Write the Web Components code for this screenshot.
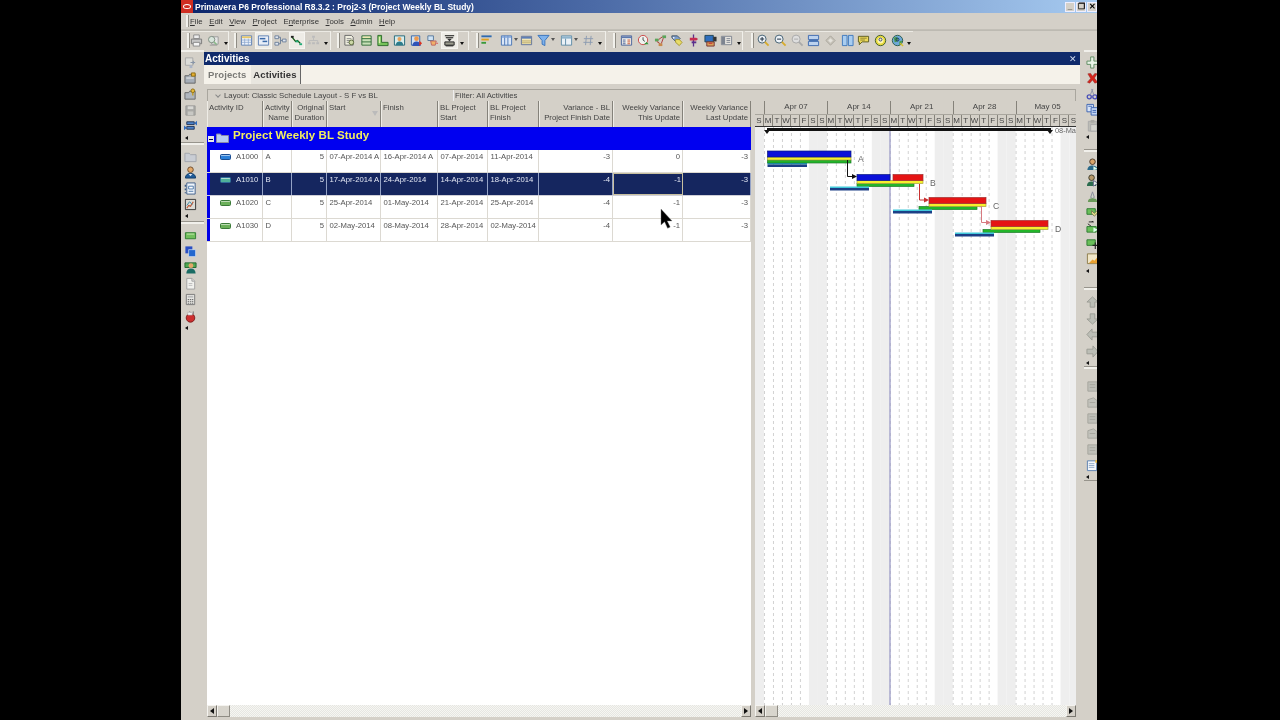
<!DOCTYPE html>
<html lang="en"><head><meta charset="utf-8"><title>Primavera P6</title>
<style>html,body{margin:0;background:#000;height:100%;overflow:hidden}</style></head>
<body>
<p6-app>
  <p6-titlebar slot="top">Primavera P6 Professional R8.3.2 : Proj2-3 (Project Weekly BL Study)</p6-titlebar>
  <p6-menubar slot="top"><span><u>F</u>ile</span><span><u>E</u>dit</span><span><u>V</u>iew</span><span><u>P</u>roject</span><span>E<u>n</u>terprise</span><span><u>T</u>ools</span><span><u>A</u>dmin</span><span><u>H</u>elp</span></p6-menubar>
  <p6-toolbar slot="top">
    <p6-tgroup style="width:47px;padding-left:5px;margin-left:1px"><p6-grip style="margin-right:-2px"></p6-grip><p6-icon name="print" w="17"></p6-icon><p6-icon name="preview" w="17"></p6-icon><p6-more w="7"></p6-more></p6-tgroup>
    <p6-tgroup style="width:100px;padding-left:3px;margin-left:2px"><p6-grip style="margin-right:1.5px"></p6-grip><p6-icon name="table"></p6-icon><p6-icon name="ganttbtn" on></p6-icon><p6-icon name="netw"></p6-icon><p6-icon name="rel" on></p6-icon><p6-icon name="dim"></p6-icon><p6-more w="8"></p6-more></p6-tgroup>
    <p6-tgroup style="width:136px;padding-left:4px;margin-left:2px"><p6-grip style="margin-right:1px"></p6-grip><p6-icon name="docs"></p6-icon><p6-icon name="rows"></p6-icon><p6-icon name="lshape"></p6-icon><p6-icon name="person1"></p6-icon><p6-icon name="person2"></p6-icon><p6-icon name="cup"></p6-icon><p6-icon name="stack" on></p6-icon><p6-more w="8"></p6-more></p6-tgroup>
    <p6-tgroup style="width:135px;padding-left:5px;margin-left:2px"><p6-grip style="margin-right:-1px"></p6-grip><p6-icon name="bars" w="16"></p6-icon><p6-icon name="cols" w="16" style="margin-left:4px"></p6-icon><p6-more w="4" tiny></p6-more><p6-icon name="calendar" w="16"></p6-icon><p6-icon name="filter" w="16" style="margin-left:1px"></p6-icon><p6-more w="4" tiny></p6-more><p6-icon name="layout" w="16" style="margin-left:3px"></p6-icon><p6-more w="4" tiny></p6-more><p6-icon name="hash" w="16" style="margin-left:2px"></p6-icon><p6-more w="8"></p6-more></p6-tgroup>
    <p6-tgroup style="width:135px;padding-left:5px;margin-left:2px"><p6-grip style="margin-right:2.5px"></p6-grip><p6-icon name="sheet"></p6-icon><p6-icon name="clock"></p6-icon><p6-icon name="tree"></p6-icon><p6-icon name="tags"></p6-icon><p6-icon name="pin"></p6-icon><p6-icon name="screen"></p6-icon><p6-icon name="panel"></p6-icon><p6-more w="7"></p6-more></p6-tgroup>
    <p6-tgroup style="width:168px;padding-left:6px;margin-left:2px;border-right:0"><p6-grip style="margin-right:1.5px"></p6-grip><p6-icon name="zin"></p6-icon><p6-icon name="zout"></p6-icon><p6-icon name="zdim"></p6-icon><p6-icon name="split"></p6-icon><p6-icon name="diamond"></p6-icon><p6-icon name="twocol"></p6-icon><p6-icon name="note"></p6-icon><p6-icon name="help"></p6-icon><p6-icon name="globe"></p6-icon><p6-more w="7"></p6-more></p6-tgroup>
  </p6-toolbar>

  <p6-vbar slot="left" style="width:23px;--vw:18px">
    <p6-vgroup style="height:93px;padding-top:5px"><p6-icon name="vlink" h="15.75"></p6-icon><p6-icon name="vfolder1" h="15.75"></p6-icon><p6-icon name="vfolder2" h="15.75"></p6-icon><p6-icon name="vsave" h="15.75"></p6-icon><p6-icon name="vswap" h="15.75"></p6-icon><p6-more vertical h="8"></p6-more></p6-vgroup>
    <p6-vgroup style="height:79px;padding-top:6px"><p6-icon name="vfolder3" h="15.9"></p6-icon><p6-icon name="vperson" h="15.9"></p6-icon><p6-icon name="vform" h="15.9"></p6-icon><p6-icon name="vchart" h="15.9"></p6-icon><p6-more vertical h="7"></p6-more></p6-vgroup>
    <p6-vgroup style="height:109px;padding-top:5px;border-bottom:0"><p6-icon name="vbar" h="16.2"></p6-icon><p6-icon name="vstack" h="16.2"></p6-icon><p6-icon name="vperson2" h="16.2"></p6-icon><p6-icon name="vdoc" h="16.2"></p6-icon><p6-icon name="vcalc" h="16.2"></p6-icon><p6-icon name="vapple" h="16.2"></p6-icon><p6-more vertical h="7"></p6-more></p6-vgroup>
  </p6-vbar>

  <p6-panel heading="Activities">
    <p6-tab slot="tabs">Projects</p6-tab>
    <p6-tab slot="tabs" active>Activities</p6-tab>
    <p6-filterbar slot="filters"><span>Layout: Classic Schedule Layout - S F vs BL</span><span>Filter: All Activities</span></p6-filterbar>
    <p6-table slot="table">
      <p6-row head>
        <p6-hcell>Activity ID</p6-hcell>
        <p6-hcell r>Activity<br>Name</p6-hcell>
        <p6-hcell r>Original<br>Duration</p6-hcell>
        <p6-hcell sorted>Start</p6-hcell>
        <p6-hcell>Finish</p6-hcell>
        <p6-hcell>BL Project<br>Start</p6-hcell>
        <p6-hcell>BL Project<br>Finish</p6-hcell>
        <p6-hcell r>Variance - BL<br>Project Finish Date</p6-hcell>
        <p6-hcell r>Weekly Variance<br>This Update</p6-hcell>
        <p6-hcell r>Weekly Variance<br>Last Update</p6-hcell>
      </p6-row>
      <p6-wbs>Project Weekly BL Study</p6-wbs>
      <p6-row>
        <p6-cell first><p6-taskicon kind="blue"></p6-taskicon>A1000</p6-cell><p6-cell>A</p6-cell><p6-cell r>5</p6-cell><p6-cell>07-Apr-2014 A</p6-cell><p6-cell>16-Apr-2014 A</p6-cell><p6-cell>07-Apr-2014</p6-cell><p6-cell>11-Apr-2014</p6-cell><p6-cell r>-3</p6-cell><p6-cell r>0</p6-cell><p6-cell r>-3</p6-cell>
      </p6-row>
      <p6-row selected>
        <p6-cell first><p6-taskicon kind="mix"></p6-taskicon>A1010</p6-cell><p6-cell>B</p6-cell><p6-cell r>5</p6-cell><p6-cell>17-Apr-2014 A</p6-cell><p6-cell>24-Apr-2014</p6-cell><p6-cell>14-Apr-2014</p6-cell><p6-cell>18-Apr-2014</p6-cell><p6-cell r>-4</p6-cell><p6-cell r focus>-1</p6-cell><p6-cell r>-3</p6-cell>
      </p6-row>
      <p6-row>
        <p6-cell first><p6-taskicon kind="green"></p6-taskicon>A1020</p6-cell><p6-cell>C</p6-cell><p6-cell r>5</p6-cell><p6-cell>25-Apr-2014</p6-cell><p6-cell>01-May-2014</p6-cell><p6-cell>21-Apr-2014</p6-cell><p6-cell>25-Apr-2014</p6-cell><p6-cell r>-4</p6-cell><p6-cell r>-1</p6-cell><p6-cell r>-3</p6-cell>
      </p6-row>
      <p6-row>
        <p6-cell first><p6-taskicon kind="green"></p6-taskicon>A1030</p6-cell><p6-cell>D</p6-cell><p6-cell r>5</p6-cell><p6-cell>02-May-2014</p6-cell><p6-cell>08-May-2014</p6-cell><p6-cell>28-Apr-2014</p6-cell><p6-cell>02-May-2014</p6-cell><p6-cell r>-4</p6-cell><p6-cell r>-1</p6-cell><p6-cell r>-3</p6-cell>
      </p6-row>
    </p6-table>
    <p6-scroll slot="tablescroll"></p6-scroll>
    <p6-gantt slot="gantt"></p6-gantt>
    <p6-scroll slot="ganttscroll"></p6-scroll>
  </p6-panel>

  <p6-vbar slot="right" style="padding-left:4px;width:26px;--vw:16px">
    <p6-vgroup style="height:100px;padding-top:5px"><p6-icon name="rplus" h="15.7"></p6-icon><p6-icon name="rx" h="15.7"></p6-icon><p6-icon name="rscis" h="15.7"></p6-icon><p6-icon name="rcopy" h="15.7"></p6-icon><p6-icon name="rpaste" h="15.7"></p6-icon><p6-more vertical h="7" left></p6-more></p6-vgroup>
    <p6-vgroup style="height:138px;padding-top:7px"><p6-icon name="rp1" h="15.7"></p6-icon><p6-icon name="rp2" h="15.7"></p6-icon><p6-icon name="rp3" h="15.7"></p6-icon><p6-icon name="rg1" h="15.7"></p6-icon><p6-icon name="rg2" h="15.7"></p6-icon><p6-icon name="rg3" h="15.7"></p6-icon><p6-icon name="rfold" h="15.7"></p6-icon><p6-more vertical h="9" left></p6-more></p6-vgroup>
    <p6-vgroup style="height:79px;padding-top:6px"><p6-icon name="aup" h="16.3"></p6-icon><p6-icon name="adown" h="16.3"></p6-icon><p6-icon name="aleft" h="16.3"></p6-icon><p6-icon name="aright" h="16.3"></p6-icon><p6-more vertical h="7" left></p6-more></p6-vgroup>
    <p6-vgroup style="height:114px;padding-top:12px"><p6-icon name="rd1" h="15.7"></p6-icon><p6-icon name="rd2" h="15.7"></p6-icon><p6-icon name="rd1" h="15.7"></p6-icon><p6-icon name="rd2" h="15.7"></p6-icon><p6-icon name="rd1" h="15.7"></p6-icon><p6-icon name="rnote" h="15.7"></p6-icon><p6-more vertical h="8" left></p6-more></p6-vgroup>
  </p6-vbar>

  <svg slot="cursor" width="16" height="24" viewBox="0 0 16 24"><path d="M1 1v16l3.6-3.2 3 6.5 2.6-1.2-3-6.2H12z" fill="#000" stroke="#777" stroke-width=".4"/></svg>
</p6-app>

<script>
const FONT = '"Liberation Sans",Arial,sans-serif';
function def(name, css, html, init) {
  customElements.define(name, class extends HTMLElement {
    constructor(){ super(); const r=this.attachShadow({mode:'open'}); r.innerHTML='<style>'+css+'</style>'+html; }
    connectedCallback(){ if(init) init.call(this,this.shadowRoot); }
  });
}
/* ---------- icons (14 x 14 grid) ---------- */
const I = {
print:'<path d="M4 1h6v4H4z" fill="#eee" stroke="#8a8a8a"/><path d="M1.5 5.5h11v5h-11z" fill="#c6c6c6" stroke="#7a7a7a"/><path d="M3.5 9h7v4h-7z" fill="#f4f4f4" stroke="#888"/>',
preview:'<path d="M5 3h7v8H5z" fill="#e5e5e5" stroke="#999"/><circle cx="5" cy="6" r="3.4" fill="#d8e6dc" stroke="#7c8a80"/><path d="M7.5 8.5l3 3" stroke="#8b8" stroke-width="1.6"/><path d="M3 12h8" stroke="#999"/>',
table:'<path d="M1.5 2h11v10h-11z" fill="#eef3fb" stroke="#5d7fb3"/><path d="M2 2.5h10v2H2z" fill="#e9c96a"/><path d="M2 6.5h10M2 9h10M5 5v7M9 5v7" stroke="#8aa6cf" stroke-width=".8"/>',
ganttbtn:'<path d="M1.5 2h11v10h-11z" fill="#e8eef8" stroke="#5d7fb3"/><path d="M3 5h6" stroke="#3a6aa8" stroke-width="1.6"/><path d="M6 8h5" stroke="#3a6aa8" stroke-width="1.6"/>',
netw:'<path d="M1 2h4v3H1zM1 9h4v3H1zM9 5.500h4v3H9z" fill="#dfe6f0" stroke="#6d7f99"/><path d="M5 3.500h2v7H5M7 7h2" fill="none" stroke="#6d7f99"/>',
rel:'<path d="M2 3l4 5 2-1 3 3" fill="none" stroke="#151" stroke-width="1.3"/><path d="M1 2h3v2H1z" fill="#222"/><path d="M6 7h3v2H6z" fill="#2a7"/><path d="M10 10h3v2h-3z" fill="#2a7"/>',
dim:'<path d="M5.500 2h3v2h-3zM1 9h3v2H1zM5.500 9h3v2h-3zM10 9h3v2h-3z" fill="#bbb"/><path d="M7 4v3M2.500 9V7h9v2" fill="none" stroke="#bbb"/>',
docs:'<path d="M2 1.500h7l2 2V12H2z" fill="#f0efe0" stroke="#666"/><path d="M4 5h5M4 7h5M4 9h3" stroke="#888"/><circle cx="9" cy="9" r="2.500" fill="#cdd8a8" stroke="#5a6a3a"/>',
rows:'<path d="M2 2h10v10H2z" fill="#c8e0b8" stroke="#2d6b36"/><path d="M2 5h10M2 8.500h10" stroke="#2d6b36"/><path d="M3 2.800h8v1.400H3z" fill="#f2e8b0"/>',
lshape:'<path d="M2 1.500h4V9h7v3.500H2z" fill="#76c25a" stroke="#2a6b2a"/><path d="M3 3h1.600v7H3z" fill="#d9f0b0"/>',
person1:'<path d="M1.500 2h11v10h-11z" fill="#d8ecec" stroke="#267"/><circle cx="7" cy="5.500" r="2.200" fill="#e9a25a"/><path d="M3 12c0-3 2-4 4-4s4 1 4 4z" fill="#2b7c8c"/>',
person2:'<path d="M1.500 2h9v10h-9z" fill="#cfe0f2" stroke="#36a"/><circle cx="7" cy="5" r="2.500" fill="#ed9a4e"/><path d="M2.500 13c0-3.500 2-5 4.500-5s4.500 1.500 4.500 5z" fill="#2f54b8"/><path d="M10 7l3 3-3 3z" fill="#d32"/>',
cup:'<path d="M2 2h6v5H2z" fill="#cfe3f5" stroke="#579"/><path d="M5 7.500h6l-1 4.500H6z" fill="#f0b068" stroke="#b66"/><path d="M11 10h2" stroke="#d55"/>',
stack:'<path d="M2 2h10M3 4h8" stroke="#111" stroke-width="1.100"/><path d="M4.500 5h5L7 8z" fill="#333"/><path d="M2 8.500h10v3.500H2z" fill="#9d9d8f" stroke="#222"/><path d="M3 12.800h8" stroke="#111"/>',
bars:'<path d="M1.500 2.500h11" stroke="#2f6bb0" stroke-width="2"/><path d="M1.500 6h8" stroke="#e0a020" stroke-width="2"/><path d="M1.500 9.500h5" stroke="#3a9a3a" stroke-width="2"/>',
cols:'<path d="M1.500 2h11v10h-11z" fill="#dbe7f7" stroke="#4a76b5"/><path d="M5 2v10M8.500 2v10" stroke="#4a76b5"/><path d="M2 2.500h10v1.500H2z" fill="#7ea3d8"/>',
calendar:'<path d="M1.500 2.500h11v9h-11z" fill="#f2e7b8" stroke="#5c6f9a"/><path d="M2 3h10v2H2z" fill="#5e7fb8"/><path d="M2 7.500h10M2 9.500h10" stroke="#b8a868"/>',
filter:'<path d="M1 1.500h12L8.500 7v5.500l-3-1.500V7z" fill="#7eb2ec" stroke="#3773bb"/>',
layout:'<path d="M1.500 2h11v10h-11z" fill="#eaf1f6" stroke="#5f8ca8"/><path d="M2 2.500h10V5H2z" fill="#8fb4cc"/><path d="M6 5v7" stroke="#5f8ca8"/>',
hash:'<path d="M4.800 2l-1 10M9.800 2l-1 10M2 5h10M1.500 9h10" stroke="#8a9bb0" fill="none"/>',
sheet:'<path d="M1.500 2h11v10h-11z" fill="#f2f0ea" stroke="#48629a"/><path d="M2 2.500h10v2H2z" fill="#5c78ae"/><path d="M3 6.500h3M3 8.500h3M3 10.500h3" stroke="#48629a"/><path d="M8 6.500h3M8 8.500h3M8 10.500h3" stroke="#c53"/>',
clock:'<circle cx="6.500" cy="6.500" r="5" fill="#eef3ef" stroke="#c44"/><path d="M6.500 3.500v3l2 1.500" fill="none" stroke="#444"/><path d="M7.500 11l5 0-2-2.500z" fill="#2a9a3a"/>',
tree:'<path d="M9 1.500h4v3H9z" fill="#5aa55a"/><path d="M1 5h4v3H1z" fill="#5aa55a"/><path d="M5 10h4v3H5z" fill="#c8884a"/><path d="M3 8l3 2M10 4.500l-2 5.500M5 6l4-3" stroke="#a33" fill="none"/>',
tags:'<path d="M2 2h6l3 3-4 4-5-5z" fill="#7c9dcc" stroke="#456"/><path d="M6 6h4l3 3-3 3.500-4-3.500z" fill="#e8dc68" stroke="#a89830"/><circle cx="4" cy="4" r=".9" fill="#fff"/>',
pin:'<path d="M7 .500v13" stroke="#5a2f8c" stroke-width="1.400"/><path d="M3 4h7l2 1.500L10 7H3z" fill="#c62c50"/><path d="M5 8h5v2H5z" fill="#5a2f8c"/>',
screen:'<path d="M1 1.500h9v7H1z" fill="#2f6fbd" stroke="#245"/><path d="M3 8.500h8v4.500H3z" fill="#d8a05a" stroke="#733"/><path d="M10 3h3.500v5H10z" fill="#333"/><path d="M5 10h4" stroke="#c33" stroke-width="1.200"/>',
panel:'<path d="M1.500 2.500h11v9h-11z" fill="#e8e6e0" stroke="#7d8490"/><path d="M2 3h3.500v8H2z" fill="#7d8490"/><path d="M7 5h4M7 7h4M7 9h4" stroke="#7d8490"/>',
zin:'<circle cx="5.500" cy="5.500" r="4.300" fill="#eef3f8" stroke="#3c5a6c"/><path d="M3.300 5.500h4.400M5.500 3.300v4.400" stroke="#234" stroke-width="1.100"/><path d="M8.500 8.500l4 4" stroke="#d8ac2c" stroke-width="2"/>',
zout:'<circle cx="5.500" cy="5.500" r="4.300" fill="#eef3f8" stroke="#3c5a6c"/><path d="M3.300 5.500h4.400" stroke="#234" stroke-width="1.100"/><path d="M8.500 8.500l4 4" stroke="#d8ac2c" stroke-width="2"/>',
zdim:'<circle cx="5.500" cy="5.500" r="4.300" fill="#dedede" stroke="#a6a6a6"/><path d="M3.300 5.500h4.400" stroke="#aaa"/><path d="M8.500 8.500l4 4" stroke="#aaa" stroke-width="2"/>',
split:'<path d="M1.500 1.500h11v4.500h-11zM1.500 8h11v4.500h-11z" fill="#bcd2ee" stroke="#3c6ab0"/><path d="M2 6.500h10v1H2z" fill="#3c6ab0"/>',
diamond:'<path d="M7 2l5 5-5 5-5-5z" fill="#c8c4ba" stroke="#a8a49a"/><path d="M7 4.500l2.500 2.500L7 9.500 4.500 7z" fill="#e4e2dc"/>',
twocol:'<path d="M1.500 1.500h5v11h-5zM8 1.500h5v11H8z" fill="#a9cdf0" stroke="#3c78bd"/>',
note:'<path d="M1.500 2.500h11v6h-7l-3 3v-3h-1z" fill="#ecd95c" stroke="#5a5a20"/><path d="M3.500 4.500h7M3.500 6.500h5" stroke="#8a8030"/>',
help:'<circle cx="7" cy="7" r="5.600" fill="#e6d83c" stroke="#3c5a2c"/><circle cx="7" cy="7" r="3.300" fill="#fff8b0"/><circle cx="7" cy="6" r="1.600" fill="none" stroke="#24348c" stroke-width="1"/><path d="M7 9h.01" stroke="#24348c" stroke-width="1.300"/>',
globe:'<circle cx="7" cy="7" r="5.600" fill="#6da8d8" stroke="#2b5a4a"/><path d="M3 4l3-1 2 2-1 3-3 1zM9 8l3-1-1 4-2 1z" fill="#4a9a4a"/><circle cx="7" cy="6" r="1.600" fill="none" stroke="#152c70" stroke-width="1"/><path d="M10 10l3 3" stroke="#d8c030" stroke-width="1.600"/>',
vlink:'<path d="M1.500 2h8v8h-8z" fill="#dcdcd8" stroke="#a8a8a8"/><path d="M7 7h5M10 5v4" stroke="#8895a8" stroke-width="1.200"/><path d="M6 10h3v3H6z" fill="#aab4c8"/>',
vfolder1:'<path d="M1 4h4l1-1.500h6V12H1z" fill="#a6aeb8" stroke="#666"/><path d="M8 1h4v3.500H8z" fill="#e8b030" stroke="#8a6a10"/><path d="M2.500 6.500h8" stroke="#eee"/>',
vfolder2:'<path d="M1 5h4l1-1.500h6V12H1z" fill="#b0b6be" stroke="#666"/><circle cx="9.500" cy="3" r="2" fill="#e6b838" stroke="#8a6a10"/><path d="M9.500 5v3" stroke="#c09818" stroke-width="1.400"/>',
vsave:'<path d="M2 2h10v10H2z" fill="#a9a9a6" stroke="#9a9a98"/><path d="M4 2.500h6v3H4z" fill="#d8d8d4"/><path d="M4 8h6v4H4z" fill="#c8c8c4"/>',
vswap:'<path d="M3 3h8v3H3z" fill="#4d84cc" stroke="#235"/><path d="M11 4.500l3-2.500v5z" fill="#2f6cc0"/><path d="M3 8h8v3H3z" fill="#4d84cc" stroke="#235"/><path d="M3 9.500l-3-2.500v5z" fill="#2f6cc0"/>',
vfolder3:'<path d="M1 3.500h4.500L7 5h6v7.500H1z" fill="#c9cdd4" stroke="#a0a4ac"/>',
vperson:'<circle cx="7" cy="4" r="3" fill="#e3a868" stroke="#6b4a2a"/><path d="M1.500 13c0-3.500 2.500-5 5.500-5s5.500 1.500 5.500 5z" fill="#1f5c9a" stroke="#123c66"/><path d="M5 8.500h4L7 11z" fill="#dfe9f6"/>',
vform:'<path d="M3 1h9v12H3z" fill="#eef4fb" stroke="#3d5c88"/><path d="M1.500 3v2M1.500 7v2M1.500 11v1" stroke="#3d5c88" stroke-width="1.500"/><path d="M5 4.500h5v3H5z" fill="#fff" stroke="#4a76a8"/><path d="M5 10h5" stroke="#4a76a8"/>',
vchart:'<path d="M1.500 1.500h11v11h-11z" fill="#dcdcd6" stroke="#333"/><path d="M3 11l2-3 2 1 3-5" fill="none" stroke="#b53" stroke-width="1.200"/><path d="M3 8l3-4 3 3" fill="none" stroke="#38a" stroke-width="1"/>',
vbar:'<path d="M1.500 4h11v6.500h-11z" fill="#71bf5c" stroke="#2d7a32"/><path d="M3 5.500h8" stroke="#c7e9b0"/>',
vstack:'<path d="M1.500 1.500h7.500v7.500H1.500z" fill="#2a4fc4"/><path d="M5 5h7.500v7.500H5z" fill="#2368cf" stroke="#dfe6f6" stroke-width=".7"/>',
vperson2:'<path d="M1 2h12v5H1z" fill="#4fa852" stroke="#21672e"/><circle cx="7.500" cy="5" r="2.600" fill="#e4a76a"/><path d="M2.500 13.500c0-3.500 2-5.500 5-5.500s5 2 5 5.500z" fill="#1a6c64"/>',
vdoc:'<path d="M3 1.500h5.500l3 3v8.500H3z" fill="#f1f1ee" stroke="#a0a0a0"/><path d="M8.500 1.500v3h3" fill="#ddd" stroke="#a0a0a0"/><path d="M5 7h4M5 9h4" stroke="#bbb"/>',
vcalc:'<path d="M2.500 1.500h9v11h-9z" fill="#e6e6e2" stroke="#777"/><path d="M4 3h6v2H4z" fill="#bbb"/><path d="M4 7h1.500M6.300 7h1.500M8.500 7H10M4 9h1.500M6.300 9h1.500M8.500 9H10M4 11h1.500M6.300 11h1.500M8.500 11H10" stroke="#666"/>',
vapple:'<circle cx="7" cy="8.500" r="4.600" fill="#cd2f2f" stroke="#7b1a1a"/><path d="M6 1.500l3 3M10 1.500v3" stroke="#777"/><path d="M4 2.500h5v3H4z" fill="#f2f2f2" stroke="#999" stroke-width=".5"/>',
rplus:'<path d="M5 1h3.500v4.500H13V9H8.500v4H5V9H1V5.500h4z" fill="#e9f4e8" stroke="#5d8a60"/>',
rx:'<path d="M2 2l3-.5 2 3 2.500-3 2.500.5-3 4.500 3.500 4.500-3 1-2.500-3.500-3 3.500-2.500-1L5 7z" fill="#d5261c" stroke="#8a2020" stroke-width=".5"/>',
rscis:'<circle cx="3.500" cy="9.500" r="2.200" fill="none" stroke="#4a50b8" stroke-width="1.400"/><circle cx="9.500" cy="9.500" r="2.200" fill="none" stroke="#4a50b8" stroke-width="1.400"/><path d="M4.500 7.500L7.500 1M8.500 7.500L6 1" stroke="#8a90a8"/>',
rcopy:'<path d="M1 1.500h7v8H1z" fill="#d8e4f6" stroke="#3a62b0"/><path d="M5.500 5h7v8h-7z" fill="#c3d5f2" stroke="#3a62b0"/><path d="M2.500 3.500h4M7 8h4M7 10h4" stroke="#3a62b0"/>',
rpaste:'<path d="M2.500 2.500h9v10.500h-9z" fill="#bcbcb6" stroke="#aaa"/><path d="M5 1h4v3H5z" fill="#a9a9a4"/><path d="M5 6h7v7H5z" fill="#d4d4ce" stroke="#aaa"/>',
rp1:'<circle cx="7" cy="4" r="3" fill="#d9a56a" stroke="#4a3a2a"/><path d="M1.500 13c0-3.500 2.500-5 5.500-5s5.500 1.500 5.500 5z" fill="#2a6a8a"/><path d="M8 9l5 3-5 1z" fill="#dfe"/>',
rp2:'<circle cx="6" cy="4" r="3" fill="#b99a6a" stroke="#3a3a2a"/><path d="M1 13c0-3.500 2-5 5-5s5 1.500 5 5z" fill="#2a6c4e"/><path d="M8 7l5 3-5 3z" fill="#e8f0e8" stroke="#668"/>',
rp3:'<path d="M7 2l2 6-2 1-2-1z" fill="#d0d8c8" stroke="#889"/><path d="M2 13c0-3 2-4 5-4s5 1 5 4z" fill="#6a9a5a"/>',
rg1:'<path d="M1 4h9v6H1z" fill="#6abf5a" stroke="#2d7a32"/><path d="M6 6l3 3 5-5v3l-5 5-3-3z" fill="#e5e08a" stroke="#775"/>',
rg2:'<path d="M3 1h5M8 1l-2-1M2 3l4 3" stroke="#222"/><path d="M1 6h10v6H1z" fill="#6abf5a" stroke="#2d7a32"/><path d="M8 7l5 2.500-5 2.500z" fill="#dfe"/>',
rg3:'<path d="M1 3h9v6H1z" fill="#6abf5a" stroke="#2d7a32"/><path d="M7 9h6M10 6v7" stroke="#222" stroke-width="1.200"/>',
rfold:'<path d="M1.500 2h11v10.500h-11z" fill="#f0e6c8" stroke="#8a7a4a"/><path d="M3 12l4-4 2 1.500 3.500-4V12z" fill="#e8a030"/>',
aup:'<path d="M7 1l6 5.500H9.500V12h-5V6.500H1z" fill="#bcbeb6" stroke="#9a9c94"/>',
adown:'<path d="M7 13L1 7.500h3.500V2h5v5.500H13z" fill="#bcbeb6" stroke="#9a9c94"/>',
aleft:'<path d="M1 7l5.500-6v3.500H13v5H6.500V13z" fill="#bcbeb6" stroke="#9a9c94"/>',
aright:'<path d="M13 7l-5.500-6v3.500H1v5h6.500V13z" fill="#bcbeb6" stroke="#9a9c94"/>',
rd1:'<path d="M2 2h10v10H2z" fill="#bfbfb8" stroke="#a5a59e"/><path d="M4 5h6M4 8h6" stroke="#a5a59e"/>',
rd2:'<path d="M2 4l6-2 4 3v7H2z" fill="#c2c2bb" stroke="#a5a59e"/><path d="M4 7h6" stroke="#a5a59e"/>',
rnote:'<path d="M1.500 2h10v10.500h-10z" fill="#f4f7fb" stroke="#5a7fb0"/><path d="M3 5h6M3 7h6M3 9h6" stroke="#8fa8c8"/><path d="M10 1h3v3h-3z" fill="#e8b848"/>'
};
def('p6-icon', ':host{display:inline-flex;align-items:center;justify-content:center;flex:none;width:var(--w,16.7px);height:var(--h,16.7px);box-sizing:border-box}:host([on]){background:#eeece6;outline:1px solid #f6f5f1;outline-offset:-1px}svg{width:13px;height:13px;display:block}', '',
  function(r){ if(this.getAttribute('w')) this.style.setProperty('--w',this.getAttribute('w')+'px');
    if(this.getAttribute('h')){ this.style.setProperty('--h',this.getAttribute('h')+'px'); this.style.setProperty('--w','var(--vw,20px)'); }
    if(!r.querySelector('svg')) r.innerHTML+='<svg viewBox="0 0 14 14" aria-hidden="true">'+(I[this.getAttribute('name')]||'')+'</svg>'; });
def('p6-grip', ':host{display:block;flex:none;width:2px;height:15px;background:#f2f1ec;border-right:1px solid #8f8c84;box-sizing:content-box}', '');
def('p6-more', ':host{display:flex;flex:none;align-items:center;justify-content:center;width:var(--w,8px);height:16px}:host([vertical]){width:20px;height:var(--h,8px)}i{display:block;width:0;height:0;border:2px solid transparent;border-top:3px solid #111;border-bottom:0;margin-top:6px}:host([tiny]) i{border-top-color:#555;margin-top:-2px}:host([vertical]) i{margin:0 10px 0 0;border:2px solid transparent;border-right:3px solid #111;border-left:0}:host([left]) i{margin:0 14px 0 0}', '<i></i>',
  function(){ const w=this.getAttribute('w'),h=this.getAttribute('h'); if(w)this.style.setProperty('--w',w+'px'); if(h)this.style.setProperty('--h',h+'px'); });
def('p6-tgroup', ':host{display:flex;flex:none;align-items:center;height:19px;box-sizing:border-box;border-right:1px solid #f0efea;border-top:1px solid #eceae4;padding-bottom:1px}', '<slot></slot>');
def('p6-toolbar', ':host{display:flex;height:20px;background:#d4d0c8;border-top:1px solid #bdbab2;box-sizing:border-box;align-items:flex-start;overflow:hidden}', '<slot></slot>');
def('p6-titlebar', ':host{display:flex;align-items:center;height:13px;background:linear-gradient(90deg,#0a246a 0,#4b6aa6 45%,#a6caf0 100%);color:#fff;font:700 8.5px '+FONT+';white-space:nowrap}.logo{width:12px;height:13px;background:#cf2e22;display:flex;align-items:center;justify-content:center;margin-right:2px;flex:none}.logo i{display:block;width:8px;height:5px;border:1.200px solid #fff;border-radius:50%;box-sizing:border-box}.ctl{margin-left:auto;display:flex;gap:1px}.ctl b{display:flex;align-items:center;justify-content:center;width:10px;height:10px;background:#d4d0c8;color:#000;border:1px solid #eef;box-sizing:border-box;font:700 8px '+FONT+'}', '<span class="logo"><i></i></span><span class="t"><slot></slot></span><span class="ctl"><b>_</b><b>&#x2750;</b><b>&#x2715;</b></span>');
def('p6-menubar', ':host{display:flex;align-items:center;height:17px;background:#d4d0c8;font:7.8px '+FONT+';color:#333;padding-left:5px;box-sizing:border-box;border-bottom:1px solid #c2bfb7}.g{width:2px;height:12px;background:#f2f1ec;border-right:1px solid #8f8c84;margin-right:1px}::slotted(span){margin-right:6.6px}', '<div class="g"></div><slot></slot>');
def('p6-vgroup', ':host{display:flex;flex-direction:column;box-sizing:border-box;border-bottom:1px solid #97948c;box-shadow:inset 0 2px 0 #f1f0eb;flex:none;align-items:flex-start}', '<slot></slot>');
def('p6-vbar', ':host{display:flex;flex-direction:column;flex:none;background:#d4d0c8;box-sizing:border-box;overflow:hidden}', '<slot></slot>');
def('p6-app', ':host{display:block;position:relative;width:916px;height:720px;margin-left:181px;overflow:hidden;background:#d4d0c8;color:#333;font:8px '+FONT+';filter:blur(.3px)}.main{display:flex;height:670px}.main ::slotted(p6-panel){flex:none}.cur ::slotted(svg){position:absolute;left:479px;top:208px}', '<slot name="top"></slot><div class="main"><slot name="left"></slot><slot></slot><slot name="right"></slot></div><div class="cur"><slot name="cursor"></slot></div>');
def('p6-panel', ':host{display:block;width:876px;height:670px;box-sizing:border-box;padding-top:2px;background:#d4d0c8}.h{display:flex;align-items:center;justify-content:space-between;height:13px;background:#0f2a6b;color:#fff;font:700 10px '+FONT+';padding:0 3px 0 1px}.h i{font:9px '+FONT+';color:#cdd6ea;font-style:normal}.tabs{display:flex;height:19px;background:#f5f2ea;padding-left:1px;align-items:stretch}.body{padding:5px 4px 3px 3px;height:636px;box-sizing:border-box;display:flex;flex-direction:column}.split{flex:1;display:flex;min-height:0;background:#d4d0c8}.l{width:544px;display:flex;flex-direction:column;background:#fff;flex:none}.r{width:321px;margin-left:4px;display:flex;flex-direction:column;background:#fff;flex:none}.fill{flex:1;min-height:0}', '<div class="h"><span id="t"></span><i>&#x2715;</i></div><div class="tabs"><slot name="tabs"></slot></div><div class="body"><slot name="filters"></slot><div class="split"><div class="l"><div class="fill"><slot name="table"></slot></div><slot name="tablescroll"></slot></div><div class="r"><div class="fill"><slot name="gantt"></slot></div><slot name="ganttscroll"></slot></div></div></div>',
  function(r){ r.getElementById('t').textContent=this.getAttribute('heading'); });
def('p6-tab', ':host{display:flex;align-items:center;padding:0 3px;font:700 9.500px '+FONT+';color:#7a7a76;letter-spacing:.1px}:host([active]){background:#e8e6df;color:#333;border-right:1px solid #666;margin-left:2px;padding:0 3px 0 2px}', '<slot></slot>');
def('p6-filterbar', ':host{display:flex;height:12px;box-sizing:border-box;background:#d4d0c8;border:1px solid #a9a69e;border-bottom:0;font:7.800px '+FONT+';color:#444;line-height:11px;width:869px;position:relative}::slotted(span:first-child){width:246px;padding-left:16px;box-sizing:border-box;border-right:1px solid #eee}::slotted(span:last-child){padding-left:1px}i{position:absolute;left:8px;top:3px;width:3px;height:3px;border:solid #888;border-width:0 1px 1px 0;transform:rotate(45deg)}', '<i></i><slot></slot>');
def('p6-table', ':host{display:block;--cols:56px 29px 35px 54px 57px 50px 51px 74px 70px 68px;height:100%;background:#fff}', '<slot></slot>');
def('p6-row', ':host{display:grid;grid-template-columns:var(--cols);height:23px;box-sizing:border-box;background:#fff;color:#555;--line:#dcd9d2;border-bottom:1px solid #dcd9d2}:host([head]){height:26px;background:#d4d0c8;border-bottom:0;color:#444}:host([selected]){background:#15265f;color:#e4e8f4;--line:#94a2c6;border-bottom-color:#cfcfd8}', '<slot></slot>');
def('p6-cell', ':host{display:block;box-sizing:border-box;padding:0 2px 0 2.500px;border-right:1px solid var(--line);font:7.700px/13px '+FONT+';white-space:nowrap;overflow:hidden;min-width:0}:host([r]){text-align:right}:host([first]){border-left:3.500px solid #0000e6;padding-left:9px;display:flex;align-items:flex-start}:host([focus]){border:1.500px solid #c8c0a0;background:#15265f;padding:0 1px 0 0;line-height:11px}', '<slot></slot>');
def('p6-hcell', ':host{display:block;box-sizing:border-box;padding:2px 2px 0 2px;border-right:1px solid #85827a;box-shadow:inset 1px 0 0 #eeece6;font:7.800px/10px '+FONT+';white-space:nowrap;overflow:hidden;position:relative}:host([r]){text-align:right}.s{display:none;position:absolute;right:2px;top:10px;width:0;height:0;border:3px solid transparent;border-top:5px solid #bbb;border-bottom:0}:host([sorted]) .s{display:block}', '<slot></slot><i class="s"></i>');
def('p6-taskicon', ':host{display:block;flex:none;width:9px;height:4px;margin:3.500px 5px 0 1px;border-radius:1.500px;background:var(--c);box-shadow:inset 0 1px 0 rgba(255,255,255,.55);border:1px solid var(--b);box-sizing:content-box}:host([kind=blue]){--c:#2a7fd8;--b:#1a4c90}:host([kind=green]){--c:#6cb05a;--b:#3a7a38}:host([kind=mix]){--c:#4fb09a;--b:#2f6c9a}', '');
def('p6-wbs', ':host{display:flex;align-items:flex-start;height:23px;background:#0000f0;color:#f2ee60;font:700 11.500px/14px '+FONT+';box-sizing:border-box;padding:1px 0 0 1px;white-space:nowrap;letter-spacing:.05px}.m{width:6px;height:6px;background:#e8e8e8;margin:8px 2px 0 0;position:relative;flex:none}.m::after{content:"";position:absolute;left:1px;right:1px;top:2.500px;height:1px;background:#005}svg{width:13px;height:11px;margin:4px 4px 0 0;flex:none}', '<i class="m"></i><svg viewBox="0 0 13 11"><path d="M.5 2h4l1 1.500h7V10.500H.5z" fill="#b9cdf2" stroke="#88a"/></svg><slot></slot>');
def('p6-scroll', ':host{display:flex;flex:none;height:12px;background:repeating-conic-gradient(#e6e6e2 0 25%,#f6f6f2 0 50%) 0 0/2px 2px;box-sizing:border-box;align-items:stretch;justify-content:flex-start}b{display:flex;align-items:center;justify-content:center;width:10px;background:#d4d0c8;border:1px solid;border-color:#f4f3ef #7a7770 #7a7770 #f4f3ef;box-sizing:border-box}b i{width:0;height:0;border:3px solid transparent}.a i{border-right:4px solid #111;border-left:0}.z i{border-left:4px solid #111;border-right:0}.t{width:13px;background:#d8d5cd;border:1px solid;border-color:#f4f3ef #8f8c84 #8f8c84 #f4f3ef;box-sizing:border-box}.s{flex:1}', '<b class="a"><i></i></b><div class="t"></div><div class="s"></div><b class="z"><i></i></b>');

/* ---------- gantt (free canvas) ---------- */
const DW = 62.9/7, X0 = 755, H = 578;
function bars(){
  const R=(x1,y1,x2,y2,c,st)=>`<rect x="${x1-X0}" y="${y1-127}" width="${x2-x1}" height="${y2-y1}" fill="${c}"${st?` stroke="${st}" stroke-width=".7"`:''}/>`;
  let s='', lines='';
  for(let d=0;d<36;d++){ const dow=(d+6)%7, px=d*DW; /* d=0 is Sunday 06 Apr */
    if(dow>=5) s+=`<rect x="${px}" y="0" width="${DW}" height="${H}" fill="#eeeeee"/>`;
    else lines+=`<line x1="${px+.5}" y1="0" x2="${px+.5}" y2="${H}" stroke="#d2d2d2" stroke-dasharray="3 3"/>`; }
  s+=lines;
  s+=`<line x1="135" y1="0" x2="135" y2="${H}" stroke="#9d9dc8" stroke-width="1.300"/>`;
  s+=R(767,128,1051,131,'#111')+`<path d="M${767-X0-3} 3h6l-3 4zM${1050-X0-3} 3h6l-3 4z" fill="#111"/>`;
  const task=(x)=>{ let o='';
    o+=R(x.gr[0],x.y+9,x.gr[1],x.y+12,'#22b52a','#1d7d28');
    o+=R(x.bl[0],x.y+12,x.bl[1],x.y+13.5,x.top)+R(x.bl[0],x.y+13.5,x.bl[1],x.y+16,'#1c3f86');
    o+=R(x.yel[0],x.y+6,x.yel[1],x.y+9,'#f6f02c','#a8a040');
    if(x.blue) o+=R(x.blue[0],x.y,x.blue[1],x.y+6,'#0b10d8','#0a1a80');
    if(x.red) o+=R(x.red[0],x.y,x.red[1],x.y+6,'#e51414','#a03030');
    return o; };
  s+=task({blue:[767.5,851],yel:[767.5,851],gr:[767.5,851],bl:[767.5,807],y:151,top:'#1b8b9c'});
  s+=task({blue:[857,890],red:[893,923],yel:[857,923],gr:[857,914],bl:[830,869],y:174.5,top:'#41c8da'});
  s+=task({red:[929,986],yel:[929,986],gr:[919,977],bl:[893,932],y:197.5,top:'#41c8da'});
  s+=task({red:[991,1048],yel:[991,1048],gr:[983,1040],bl:[955,994],y:220.5,top:'#41c8da'});
  const link=(x,y1,y2,x2,c)=>`<path d="M${x-X0} ${y1-127}V${y2-127}H${x2-3-X0}" fill="none" stroke="${c}"/><path d="M${x2-5-X0} ${y2-127-2.5}l5 2.5-5 2.5z" fill="${c}"/>`;
  s+=link(847.5,160,176.5,857,'#111')+link(919.5,184,200,929,'#c83030')+link(981.5,206,222.5,991,'#d77a80');
  return s;
}
def('p6-gantt', ':host{display:block;position:relative;height:100%;background:#fff;overflow:hidden;font:8px '+FONT+';color:#555}.w{display:flex;height:13px;background:#d4d0c8;padding-left:9px;box-sizing:border-box}.w span{flex:none;width:62.900px;text-align:center;line-height:12px;border-left:1px solid #85827a;box-sizing:border-box;color:#444}.d{display:flex;height:13px;background:#d4d0c8;border-top:1px solid #a9a69e;border-bottom:1px solid #333;box-sizing:border-box}.d span{flex:none;width:8.986px;text-align:center;line-height:11px;border-right:1px solid #85827a;box-sizing:border-box;font-size:8px;color:#444}.c{position:relative;height:578px}svg{display:block;position:absolute;left:0;top:0}.lab{position:absolute;color:#666;font-size:8.600px;line-height:10px;white-space:nowrap}.lab.t{font-size:7.400px}',
 '<div class="w" id="w"></div><div class="d" id="d"></div><div class="c" id="c"></div>',
 function(r){ if(r.getElementById('c').firstChild) return;
   r.getElementById('w').innerHTML=['Apr 07','Apr 14','Apr 21','Apr 28','May 05'].map(t=>`<span>${t}</span>`).join('');
   const L='SMTWTFS'; let h=''; for(let i=0;i<36;i++) h+=`<span>${L[i%7]}</span>`; r.getElementById('d').innerHTML=h;
   r.getElementById('c').innerHTML=`<svg width="321" height="${H}" viewBox="0 0 321 ${H}">${bars()}</svg>`+
     [['08-Ma',1055,126,'t'],['A',858,154,''],['B',930,178,''],['C',993,201,''],['D',1055,224,'']].map(([t,x,y,c])=>`<span class="lab ${c}" style="left:${x-X0}px;top:${y-127}px">${t}</span>`).join('');
 });
</script>
</body></html>
